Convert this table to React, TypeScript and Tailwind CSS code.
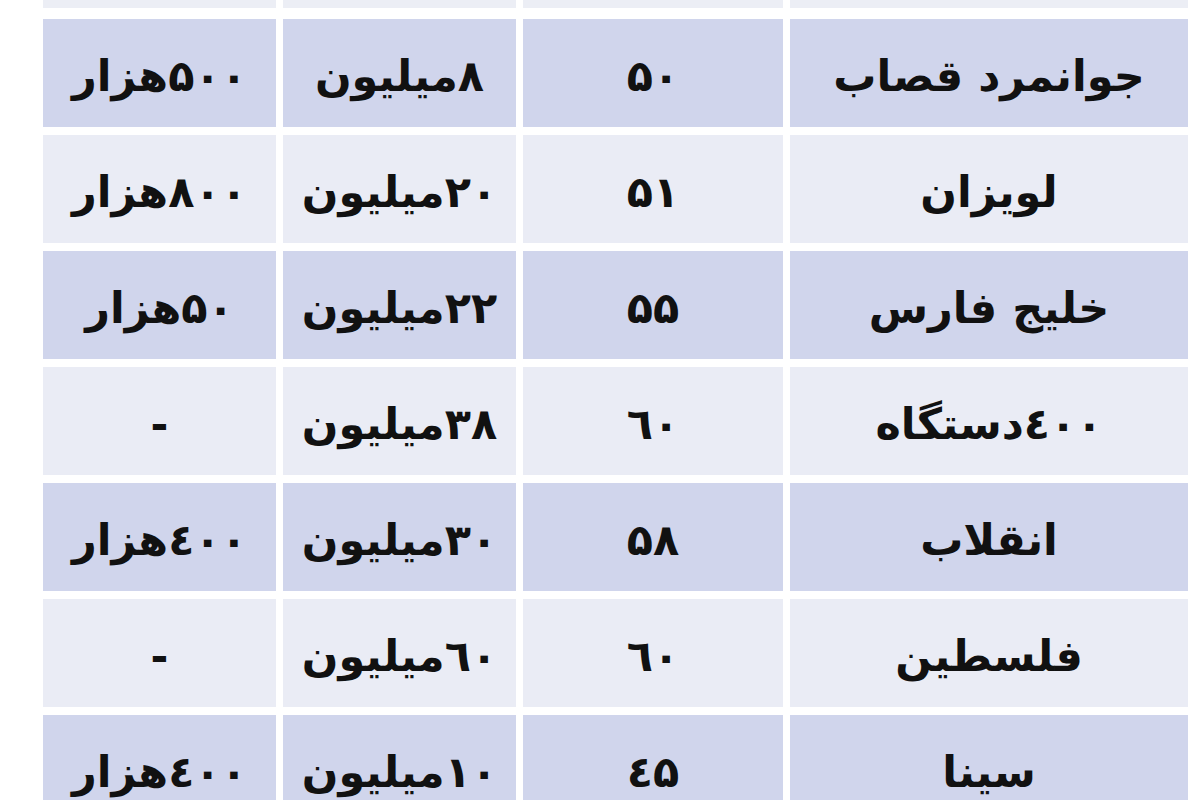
const rows: [string, string, string, string][] = [
  ["۵۰۰هزار", "۸میلیون", "۵۰", "جوانمرد قصاب"],
  ["۸۰۰هزار", "۲۰میلیون", "۵۱", "لویزان"],
  ["۵۰هزار", "۲۲میلیون", "۵۵", "خلیج فارس"],
  ["-", "۳۸میلیون", "٦۰", "٤۰۰دستگاه"],
  ["٤۰۰هزار", "۳۰میلیون", "۵۸", "انقلاب"],
  ["-", "٦۰میلیون", "٦۰", "فلسطین"],
  ["٤۰۰هزار", "۱۰میلیون", "٤۵", "سینا"],
];

function Row({ cells, shaded }: { cells: string[]; shaded: boolean }) {
  const bg = shaded ? "bg-[#d0d5ec]" : "bg-[#eaecf5]";
  return (
    <div className="grid grid-cols-[233px_233px_260px_398px] gap-x-[7px] h-[108px] shrink-0">
      {cells.map((c, i) => (
        <div
          key={i}
          dir="rtl"
          className={`${bg} flex items-center justify-center pt-[6px] text-[43px] font-bold text-[#111] leading-none`}
        >
          {c}
        </div>
      ))}
    </div>
  );
}

export default function App() {
  return (
    <div
      className="w-[1200px] h-[800px] overflow-hidden bg-white pl-[43px]"
      style={{ fontFamily: '"DejaVu Sans", sans-serif' }}
    >
      <div className="grid grid-cols-[233px_233px_260px_398px] gap-x-[7px] h-[8px]">
        <div className="bg-[#eceef5]" />
        <div className="bg-[#eceef5]" />
        <div className="bg-[#eceef5]" />
        <div className="bg-[#eceef5]" />
      </div>
      <div className="flex flex-col gap-y-[8px] mt-[11px]">
        {rows.map((r, i) => (
          <Row key={i} cells={r} shaded={i % 2 === 0} />
        ))}
      </div>
    </div>
  );
}
